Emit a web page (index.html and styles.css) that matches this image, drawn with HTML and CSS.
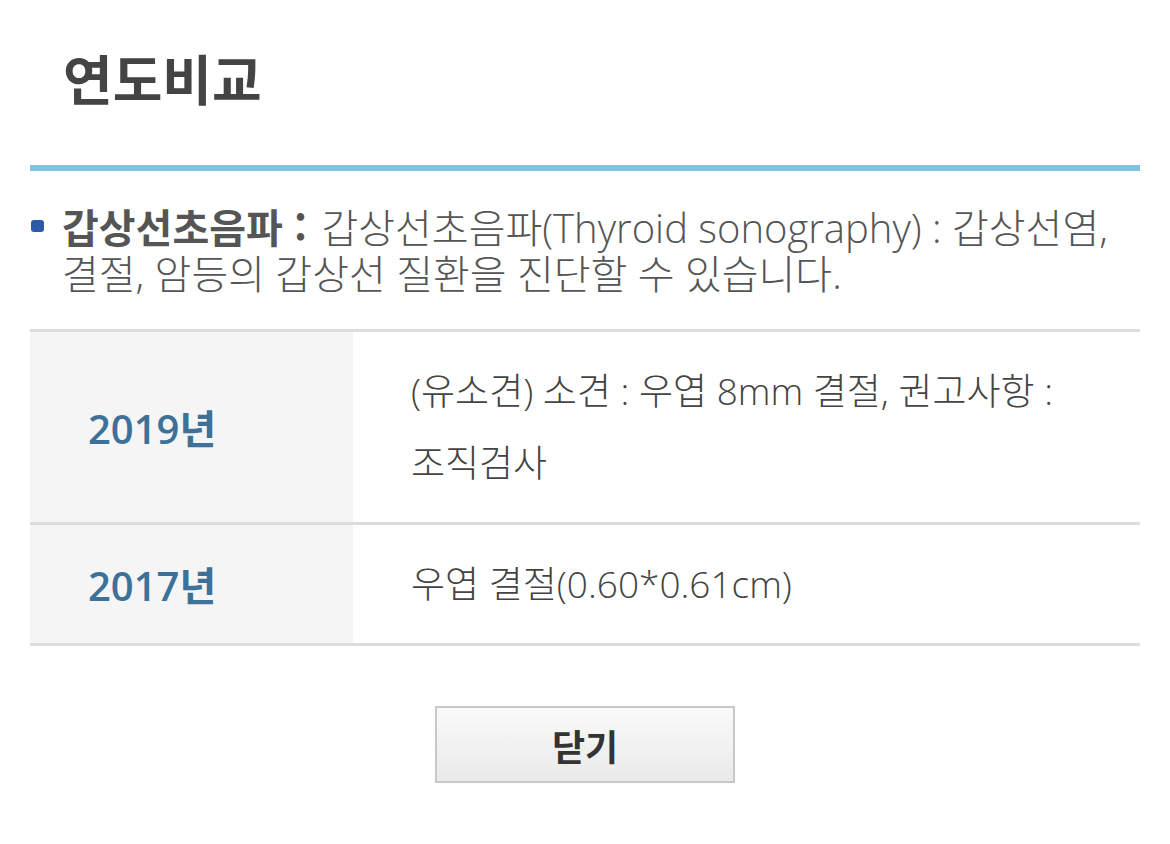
FILE: index.html
```html
<!DOCTYPE html>
<html lang="ko">
<head>
  <meta charset="UTF-8">
  <meta name="viewport" content="width=device-width, initial-scale=1.0">
  <title>연도비교</title>
  <link rel="stylesheet" href="styles.css">
</head>
<body>
  <div class="popup">
    <h1 class="popup-title">연도비교</h1>

    <div class="popup-body">
      <p class="exam-desc">
        <strong>갑상선초음파 :</strong> 갑상선초음파(Thyroid sonography) : 갑상선염, 결절, 암등의 갑상선 질환을 진단할 수 있습니다.
      </p>

      <table class="compare-table">
        <tr>
          <th>2019년</th>
          <td>(유소견) 소견 : 우엽 8mm 결절, 권고사항 : 조직검사</td>
        </tr>
        <tr>
          <th>2017년</th>
          <td>우엽 결절(0.60*0.61cm)</td>
        </tr>
      </table>

      <div class="btn-area">
        <button class="btn-close" onclick="window.close()">닫기</button>
      </div>
    </div>
  </div>
</body>
</html>
```

FILE: styles.css
```css
body {
  margin: 0;
  background: #fff;
  font-family: "Open Sans", "Noto Sans CJK KR", sans-serif;
  color: #555;
  word-break: keep-all;
}
.popup {
  padding: 0 30px;
}
.popup-title {
  margin: 0;
  padding: 41px 0 50px 33px;
  font-family: "Noto Sans CJK KR", sans-serif;
  font-size: 54px;
  font-weight: bold;
  line-height: 74px;
  color: #444;
  border-bottom: 6px solid #7fc3e0;
}
.exam-desc {
  position: relative;
  margin: 32px 0 32px;
  padding-left: 32px;
  font-size: 40px;
  font-weight: 300;
  line-height: 46px;
  color: #555;
}
.exam-desc::before {
  content: "";
  position: absolute;
  left: 1px;
  top: 17px;
  width: 13px;
  height: 12px;
  border-radius: 3px;
  background: #2c5aa8;
}
.exam-desc strong {
  font-family: "Noto Sans CJK KR", sans-serif;
  font-weight: bold;
  margin-right: 4px;
}
.compare-table {
  width: 100%;
  border-collapse: collapse;
  border-top: 3px solid #ddd;
}
.compare-table tr {
  border-bottom: 3px solid #ddd;
}
.compare-table th {
  width: 265px;
  padding: 23px 0 23px 58px;
  background: #f5f5f5;
  text-align: left;
  font-size: 40px;
  font-weight: 600;
  color: #3d7199;
  vertical-align: middle;
}
.compare-table td {
  padding: 23px 40px 23px 58px;
  font-size: 37px;
  font-weight: 300;
  line-height: 72px;
  color: #444;
}
.btn-area {
  padding-top: 60px;
  text-align: center;
}
.btn-close {
  width: 300px;
  height: 77px;
  border: 2px solid #c8c8c8;
  background: linear-gradient(#fafafa, #e9e9e9);
  font-family: "Noto Sans CJK KR", sans-serif;
  font-size: 36px;
  font-weight: bold;
  color: #333;
  cursor: pointer;
}
```
